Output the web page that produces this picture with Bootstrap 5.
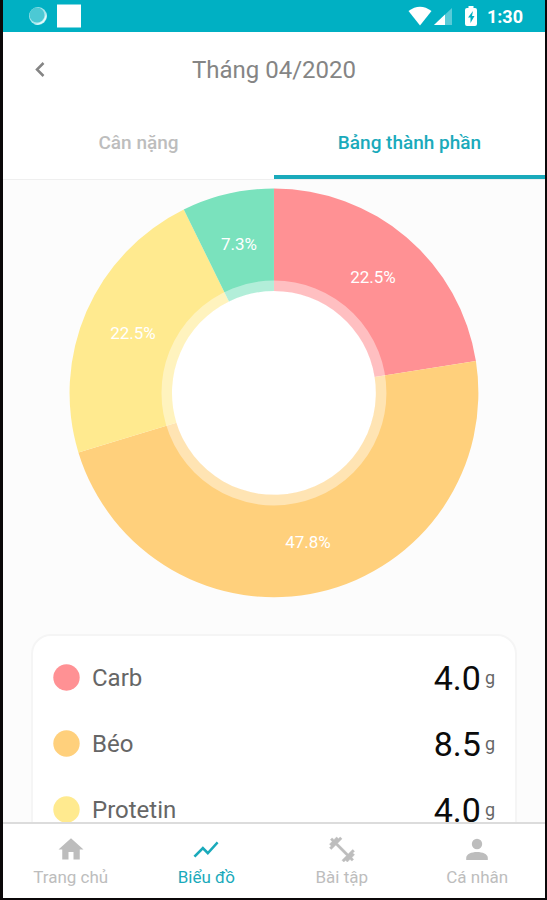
<!DOCTYPE html>
<html lang="vi">
<head>
<meta charset="utf-8">
<meta name="viewport" content="width=device-width, initial-scale=1">
<title>Biểu đồ</title>
<link href="https://cdn.jsdelivr.net/npm/bootstrap@5.3.0/dist/css/bootstrap.min.css" rel="stylesheet">
<style>
  :root { --teal: #00b0c3; --teal-text: #1aaabb; --muted: #bdbdbd; }
  body { font-family: Roboto, "Noto Sans", sans-serif; background: #fff; }
  .phone { border: solid #0b0809; border-width: 0 2px 2px 3px; }
  .status { background: var(--teal); height: 32px; font-size: 18px; padding: 0 22px 0 24px; }
  .indicators { gap: 2px; margin-right: 7px; }
  .topbar { height: 75px; font-size: 24px; color: #858585; }
  .topbar button { color: #858585; width: 74px; }
  .tabs { border-bottom: 1px solid #efefef; }
  .tabs button { height: 72px; font-size: 19px; font-weight: 500; color: var(--muted); border-bottom: 4px solid transparent; }
  .tabs button.active { color: var(--teal-text); border-color: var(--teal-text); }
  .content { background: #fcfcfc; scrollbar-width: none; }
  .content::-webkit-scrollbar { display: none; }
  .donut { width: 76%; font-size: 17px; }
  .panel { border: 2px solid #f5f5f5; border-radius: 20px; margin: 34px 28px 0; padding: 9px 20px; }
  .entry { height: 66px; }
  .dot { width: 27px; height: 27px; }
  .nutrient { font-size: 24px; color: #666; }
  .amount { font-size: 34px; color: #0b0b0b; line-height: 1; }
  .unit { font-size: 18px; color: #666; }
  .bottom { border-top: 2px solid #dcdcdc; height: 76px; }
  .bottom a { color: var(--muted); font-size: 17px; line-height: 24px; padding-top: 10px; }
  .bottom svg { width: 30px; height: 31px; }
  .bottom a.active { color: var(--teal-text); }
</style>
<script src="https://cdn.jsdelivr.net/npm/bootstrap@5.3.0/dist/js/bootstrap.bundle.min.js"></script>
</head>
<body>
<div class="phone d-flex flex-column vh-100">
  <div class="status d-flex align-items-center text-white fw-bold flex-shrink-0">
    <svg width="22" height="22" viewBox="0 0 22 22" aria-hidden="true"><circle cx="11" cy="11" r="9" fill="#a5e6ec"/><circle cx="10" cy="10" r="7.500" fill="#4cc9d4"/><path d="M19 8a9 9 0 0 1-12 11c7 0 11-4 12-11z" fill="#e3fafb"/></svg>
    <svg class="ms-2" width="24" height="24" viewBox="0 0 24 24" aria-hidden="true"><path fill="#fff" d="M0 .500h24v23H0z"/></svg>
    <div class="indicators d-flex align-items-center ms-auto">
      <svg width="24" height="20" viewBox="0 0 24 20" aria-hidden="true"><path fill="#fff" d="M12 19.500L.5 5Q12-3.500 23.500 5z"/></svg>
      <svg width="18" height="20" viewBox="0 0 18 20" aria-hidden="true"><path fill="#fff" opacity=".35" d="M0 19L18 2v17z"/><path fill="#fff" d="M0 19L11 8.400V19z"/></svg>
      <svg class="ms-1" width="22" height="20" viewBox="-4 0 22 20" aria-hidden="true"><path fill="#fff" d="M6.500 0h5v2H13q2 0 2 2v14q0 2-2 2H5q-2 0-2-2V4q0-2 2-2h1.500z"/><path fill="#00b0c3" d="M11 5L6 11.500h2.500V17l4-7H10z"/></svg>
    </div>
    <span>1:30</span>
  </div>
  <header class="topbar d-flex align-items-center flex-shrink-0">
    <button class="btn p-0 border-0 d-flex justify-content-center" type="button" aria-label="Tháng trước">
      <svg width="14" height="18" viewBox="0 0 14 18" fill="none" stroke="currentColor" stroke-width="2.500"><path d="M10.500 2L4 8.500l6.500 6.500"/></svg>
    </button>
    <div class="flex-grow-1 text-center">Tháng 04/2020</div>
    <div><button class="btn p-0 border-0 invisible" type="button" tabindex="-1" aria-hidden="true"></button></div>
  </header>
  <div class="tabs d-flex flex-shrink-0" role="tablist">
    <button class="btn rounded-0 border-start-0 border-end-0 border-top-0 p-0 pt-1 col-6" type="button" role="tab" aria-selected="false">Cân nặng</button>
    <button class="btn rounded-0 border-start-0 border-end-0 border-top-0 p-0 pt-1 col-6 active" type="button" role="tab" aria-selected="true">Bảng thành phần</button>
  </div>
  <main class="content flex-grow-1 overflow-auto">
    <svg class="donut d-block mx-auto mt-2" viewBox="-206 -205 412 412" role="img" aria-label="Bảng thành phần">
      <circle r="104" fill="#fff"/>
      <path fill="#ff9194" d="M0-204.500A204.500 204.500 0 0 1 202-32L100.700-16A102 102 0 0 0 0-102z"/>
      <path fill="#ffd07c" d="M202-32A204.500 204.500 0 0 1-195.600 59.500L-97.600 29.700A102 102 0 0 0 100.700-16z"/>
      <path fill="#ffea8f" d="M-195.600 59.500A204.500 204.500 0 0 1-90.200-183.500L-45-91.500A102 102 0 0 0-97.600 29.700z"/>
      <path fill="#7ae2bd" d="M-90.200-183.500A204.500 204.500 0 0 1 0-204.500V-102A102 102 0 0 0-45-91.500z"/>
      <circle r="107" fill="none" stroke="#fff" stroke-width="11" stroke-opacity=".42"/>
      <g fill="#fff" text-anchor="middle">
        <text x="99" y="-110">22.5%</text>
        <text x="34" y="155">47.8%</text>
        <text x="-141" y="-54">22.5%</text>
        <text x="-35" y="-143">7.3%</text>
      </g>
    </svg>
    <section class="panel bg-white">
      <div class="entry d-flex align-items-center">
        <svg class="dot" viewBox="0 0 27 27" aria-hidden="true"><circle cx="13.500" cy="13.500" r="13.200" fill="#ff9194"/></svg>
        <span class="nutrient flex-grow-1 ps-2 ms-1">Carb</span><span class="amount">4.0</span><span class="unit ms-1">g</span>
      </div>
      <div class="entry d-flex align-items-center">
        <svg class="dot" viewBox="0 0 27 27" aria-hidden="true"><circle cx="13.500" cy="13.500" r="13.200" fill="#ffd07c"/></svg>
        <span class="nutrient flex-grow-1 ps-2 ms-1">Béo</span><span class="amount">8.5</span><span class="unit ms-1">g</span>
      </div>
      <div class="entry d-flex align-items-center">
        <svg class="dot" viewBox="0 0 27 27" aria-hidden="true"><circle cx="13.500" cy="13.500" r="13.200" fill="#ffea8f"/></svg>
        <span class="nutrient flex-grow-1 ps-2 ms-1">Protetin</span><span class="amount">4.0</span><span class="unit ms-1">g</span>
      </div>
    </section>
  </main>
  <nav class="bottom d-flex bg-white flex-shrink-0 text-center">
    <a class="col-3 text-decoration-none d-flex flex-column align-items-center" href="#">
      <svg viewBox="0 0 24 24" fill="currentColor" aria-hidden="true"><path d="M10 20v-6h4v6h5v-8h3L12 3 2 12h3v8z"/></svg>Trang chủ</a>
    <a class="active col-3 text-decoration-none d-flex flex-column align-items-center" href="#" aria-current="page">
      <svg viewBox="0 0 24 24" fill="currentColor" aria-hidden="true"><path d="M3.500 18.490l6-6.010 4 4L22 6.920l-1.410-1.410-7.090 7.970-4-4L2 16.990z"/></svg>Biểu đồ</a>
    <a class="col-3 text-decoration-none d-flex flex-column align-items-center" href="#">
      <svg viewBox="0 0 24 24" fill="currentColor" stroke="currentColor" stroke-width=".4" aria-hidden="true"><path d="M20.570 14.860L22 13.430 20.570 12 17 15.570 8.430 7 12 3.430 10.570 2 9.140 3.430 7.710 2 5.570 4.140 4.140 2.710 2.710 4.140l1.430 1.430L2 7.710l1.430 1.430L2 10.570 3.430 12 7 8.430 15.570 17 12 20.570 13.430 22l1.430-1.430L16.290 22l2.140-2.140 1.430 1.430 1.430-1.430-1.430-1.430L22 16.290z"/></svg>Bài tập</a>
    <a class="col-3 text-decoration-none d-flex flex-column align-items-center" href="#">
      <svg viewBox="0 0 30 31" fill="currentColor" aria-hidden="true"><circle cx="15" cy="10" r="5.200"/><path d="M4.200 26v-2C4.200 20 9.500 18 15 18s10.800 2 10.800 6v2z"/></svg>Cá nhân</a>
  </nav>
</div>
</body>
</html>
